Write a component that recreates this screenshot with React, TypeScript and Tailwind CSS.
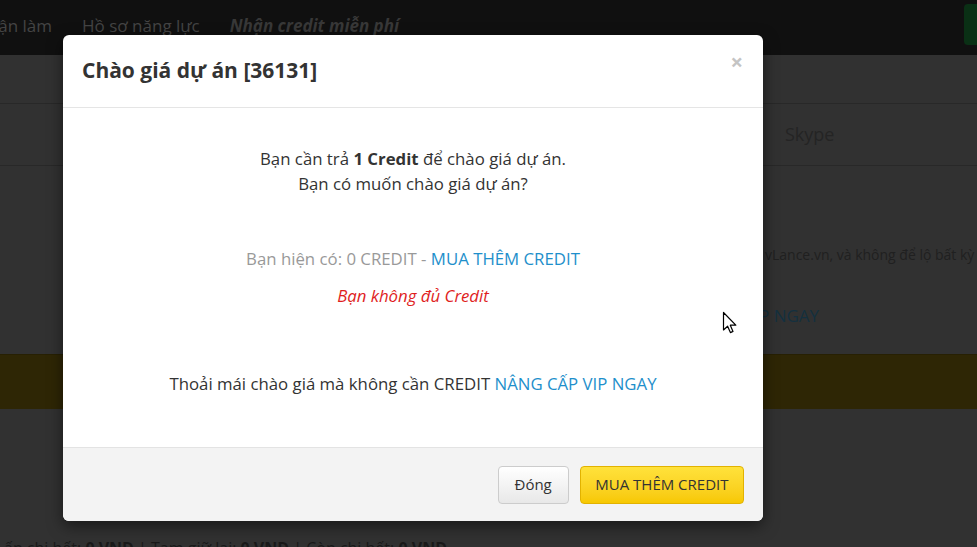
import React from "react";

const Cursor = () => (
  <svg
    className="absolute left-[722px] top-[311px]"
    width="18"
    height="24"
    viewBox="0 0 18 24"
  >
    <path
      d="M1.5 1.5 L1.5 19 L5.6 15.2 L8.4 21.6 L11 20.4 L8.3 14.2 L13.8 14.2 Z"
      fill="#fff"
      stroke="#000"
      strokeWidth="1.2"
      strokeLinejoin="round"
    />
  </svg>
);

const BackgroundPage = () => {
  return (
    <div className="flex flex-col h-full">
      <div className="h-[55px] bg-[#101010] flex items-center pb-[4px] text-[17px] text-[#444] shrink-0">
        <span className="-ml-[25px]">Nhận làm</span>
        <span className="ml-[30px]">Hồ sơ năng lực</span>
        <span className="ml-[30px] font-bold italic text-[#383838]">
          Nhận credit miễn phí
        </span>
        <div className="ml-auto mr-[-21px] w-[34px] h-[41px] mt-[-2px] rounded-[4px] bg-[#0a3015]" />
      </div>
      <div className="flex-1 flex flex-col bg-[#313131]">
        <div className="h-[49px] border-b border-[#282828]" />
        <div className="h-[62px] border-b border-[#282828] flex items-center pl-[785px] text-[18px] text-[#242424]">
          Skype
        </div>
        <div className="h-[78px]" />
        <div className="pl-[765px] text-[14px] text-[#202020] whitespace-nowrap leading-[22px]">
          vLance.vn, và không để lộ bất kỳ thông tin
        </div>
        <div className="pl-[759px] mt-[38px] text-[17px] text-[#14303f] whitespace-nowrap leading-[24px]">
          P NGAY
        </div>
        <div className="mt-[26px] h-[55px] bg-[#2e2605] border-t border-[#272003]" />
        <div className="flex-1" />
        <div className="h-[6px] pl-[4px] text-[16px] text-[#191919] whitespace-nowrap leading-[20px] overflow-hidden">
          <div className="-mt-[3px]">
            ấn chi hết: <b>0 VND</b> | Tạm giữ lại: <b>0 VND</b> | Còn chi
            hết: <b>0 VND</b>
          </div>
        </div>
      </div>
    </div>
  );
};

const OfferModal = () => {
  return (
    <div className="absolute left-[63px] top-[35px] w-[700px] h-[486px] bg-white rounded-[6px] shadow-[0_5px_15px_rgba(0,0,0,0.5)] flex flex-col overflow-hidden">
      <div className="h-[73px] shrink-0 border-b border-[#e5e5e5] flex items-center pl-[19px] pr-[20px]">
        <h4 className="text-[21px] font-bold text-[#333]">
          Chào giá dự án [36131]
        </h4>
        <span className="ml-auto -mt-[20px] text-[22px] font-bold text-[#c4c4c4] leading-none">
          ×
        </span>
      </div>
      <div className="flex-1 flex flex-col items-center text-[16.8px] text-[#333] leading-[25px] pt-[38px]">
        <div className="text-center">
          Bạn cần trả <b>1 Credit</b> để chào giá dự án.
          <br />
          Bạn có muốn chào giá dự án?
        </div>
        <div className="mt-[50px] text-[#999]">
          Bạn hiện có: 0 CREDIT -{" "}
          <span className="text-[#1e8fcb]">MUA THÊM CREDIT</span>
        </div>
        <div className="mt-[12px] italic text-[#e01e1e]">
          Bạn không đủ Credit
        </div>
        <div className="mt-[63px]">
          Thoải mái chào giá mà không cần CREDIT{" "}
          <span className="text-[#1e8fcb]">NÂNG CẤP VIP NGAY</span>
        </div>
      </div>
      <div className="h-[74px] shrink-0 bg-[#f3f3f3] border-t border-[#e3e3e3] flex items-center justify-end gap-[11px] pr-[19px]">
        <button className="h-[38px] px-[16px] rounded-[4px] border border-[#ccc] bg-gradient-to-b from-white to-[#e8e8e8] text-[15px] text-[#333]">
          Đóng
        </button>
        <button className="h-[38px] px-[14.5px] rounded-[4px] border border-[#e2b200] bg-gradient-to-b from-[#ffe23a] to-[#f7c800] text-[15px] text-[#333]">
          MUA THÊM CREDIT
        </button>
      </div>
    </div>
  );
};

export default function App() {
  return (
    <div
      className="relative w-[977px] h-[547px] overflow-hidden bg-[#313131]"
      style={{ fontFamily: '"Open Sans", "Noto Sans", sans-serif' }}
    >
      <BackgroundPage />
      <OfferModal />
      <Cursor />
    </div>
  );
}
